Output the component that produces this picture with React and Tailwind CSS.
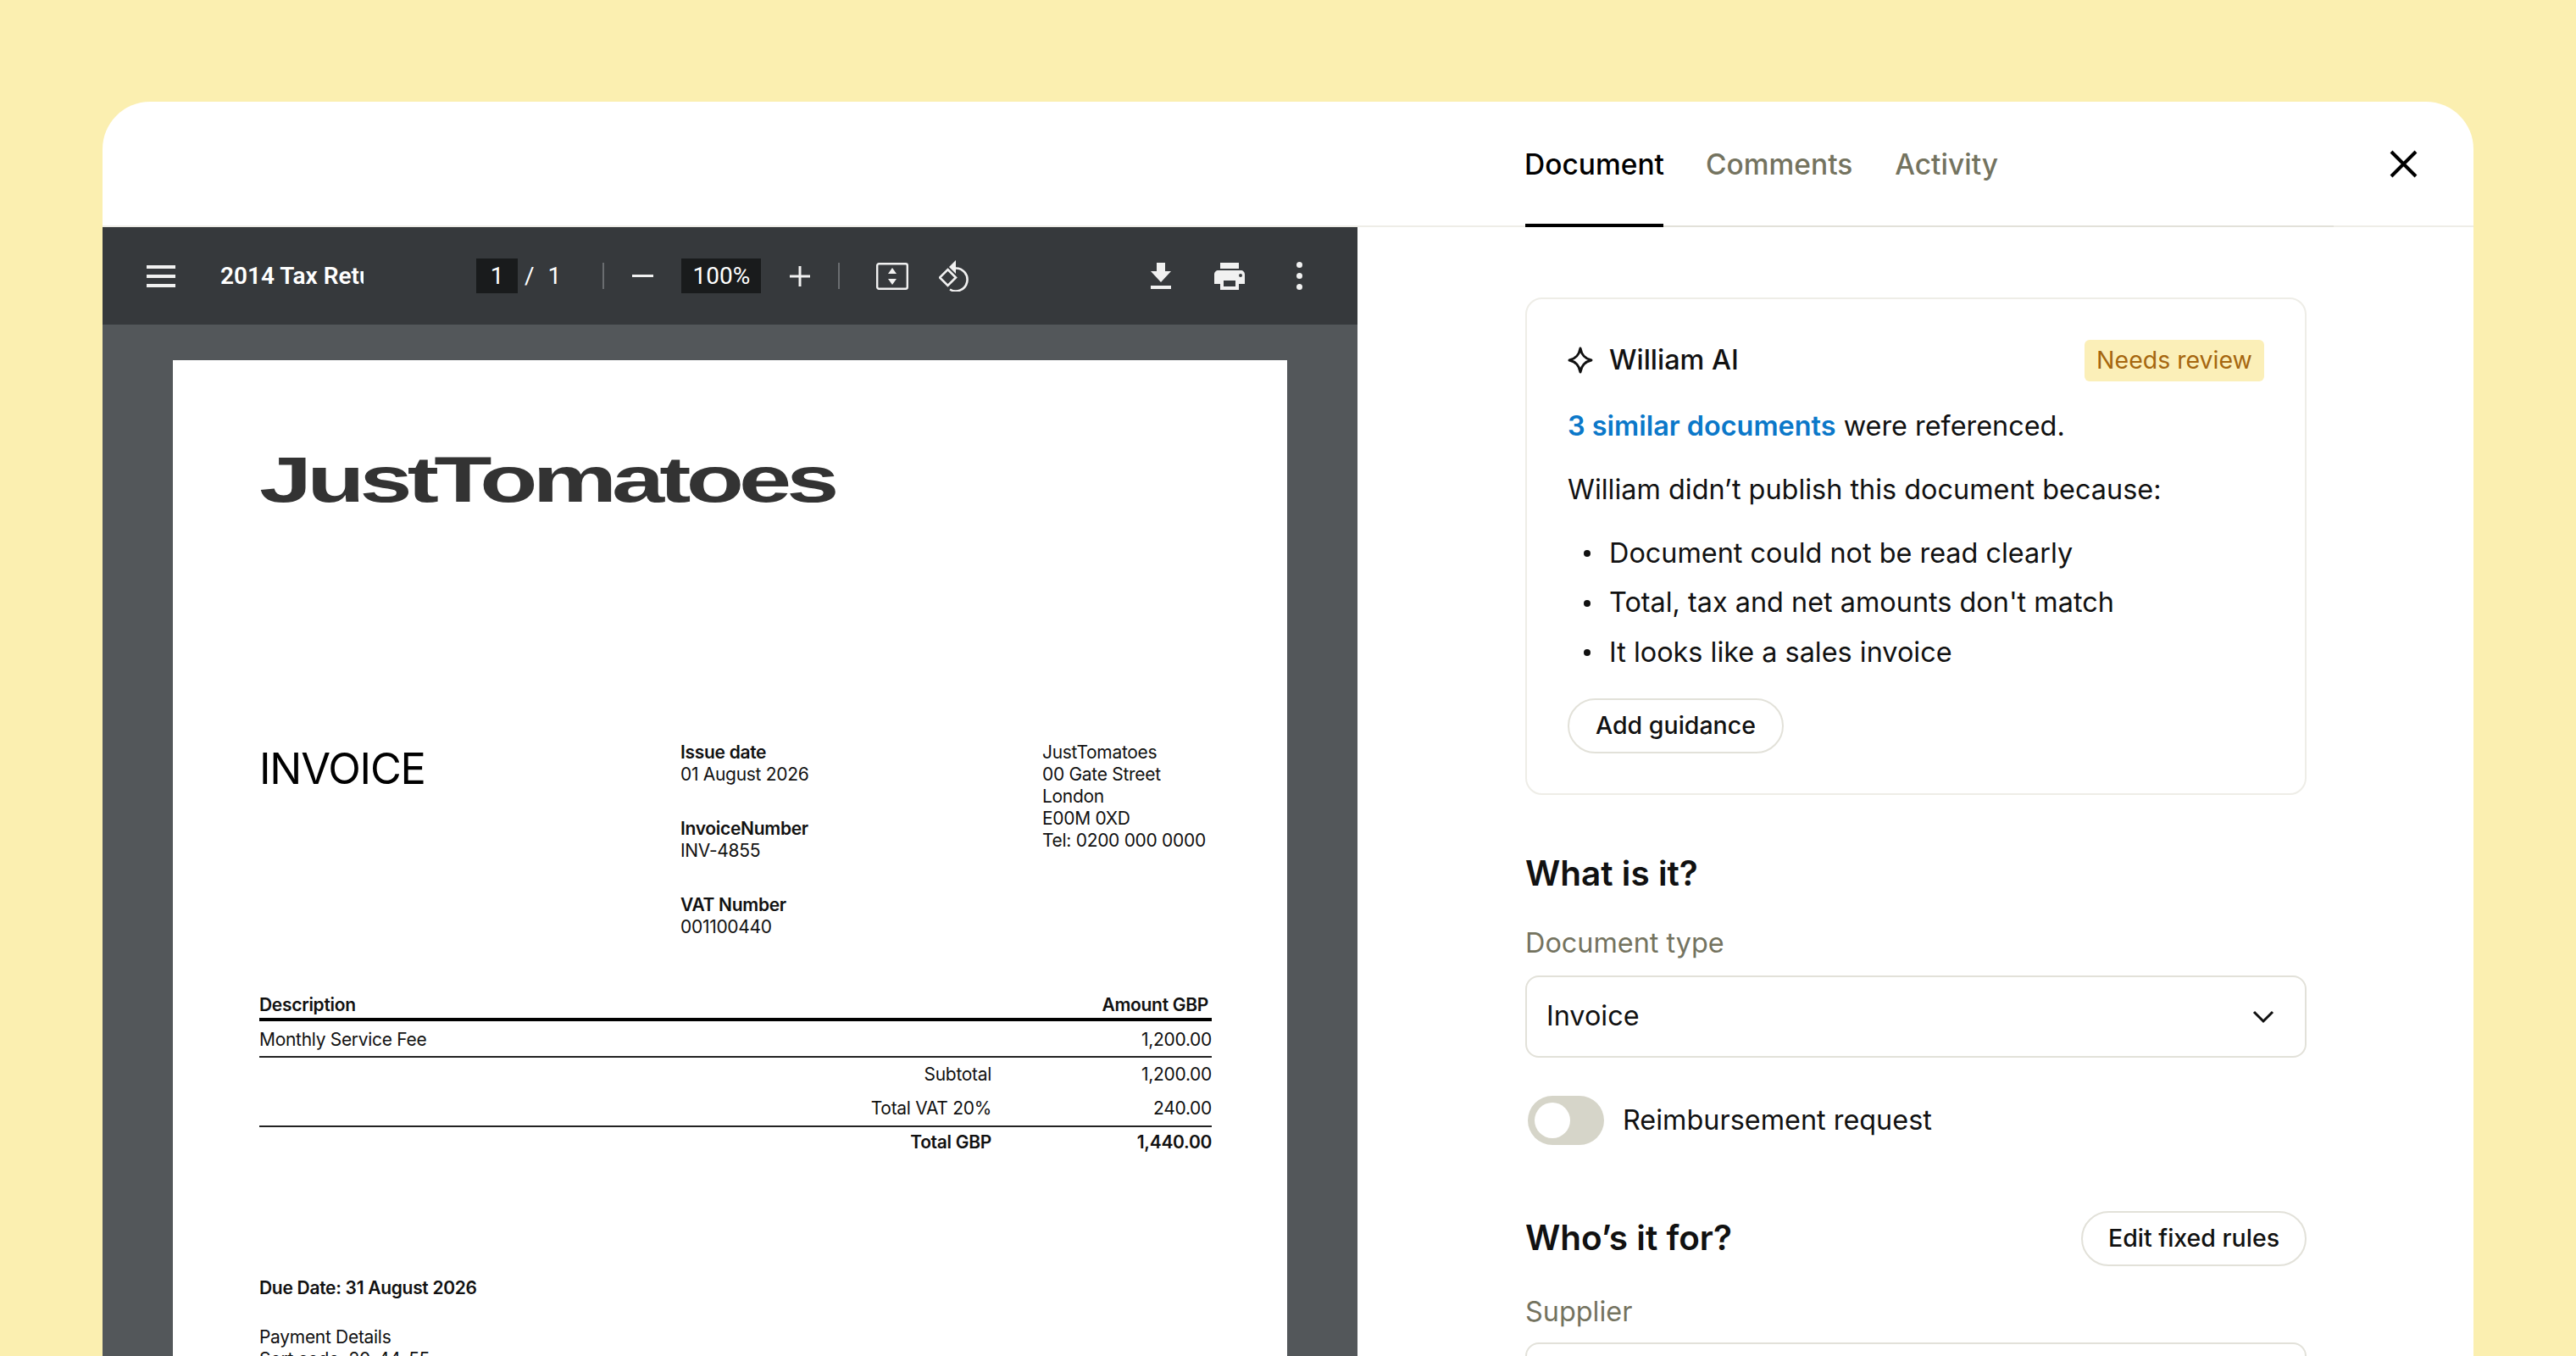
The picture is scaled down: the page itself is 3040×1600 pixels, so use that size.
const F = "font-['Inter','Liberation_Sans',sans-serif]";

function Toolbar() {
  return (
    <div className="h-[115px] shrink-0 bg-[#36393c] flex items-center text-white font-['Roboto',sans-serif] text-[30px] relative">
      <div className="ml-[52px] w-[34px] h-[26px] flex flex-col justify-between">
        <div className="h-[4px] bg-[#f1f1f1]" /><div className="h-[4px] bg-[#f1f1f1]" /><div className="h-[4px] bg-[#f1f1f1]" />
      </div>
      <div className="ml-[53px] w-[169px] overflow-hidden whitespace-nowrap font-semibold text-[28px]">2014 Tax Return.pdf</div>
      <div className="ml-[133px] w-[49px] h-[41px] bg-[#191b1c] flex items-center justify-center text-[28px]">1</div>
      <span className="ml-[8px] text-[28px]">/</span>
      <span className="ml-[16px] text-[28px]">1</span>
      <div className="ml-[49px] w-[2px] h-[31px] bg-[#6a6d70]" />
      <div className="ml-[33px] w-[25px] h-[3px] bg-[#f1f1f1]" />
      <div className="ml-[33px] w-[94px] h-[41px] bg-[#191b1c] flex items-center justify-center text-[28px]">100%</div>
      <svg className="ml-[33px]" width="26" height="26" viewBox="0 0 26 26"><path d="M13 1v24M1 13h24" stroke="#f1f1f1" strokeWidth="3" /></svg>
      <div className="ml-[32px] w-[2px] h-[31px] bg-[#6a6d70]" />
      <svg className="ml-[43px]" width="38" height="32" viewBox="0 0 38 32" fill="none"><rect x="1.200" y="1.200" width="35.600" height="29.600" rx="2" stroke="#f1f1f1" strokeWidth="2.4" /><path d="M19 6l5 7H14zM19 26l5-7H14z" fill="#f1f1f1" /></svg>
      <svg className="ml-[36px]" width="36" height="37" viewBox="0 0 36 37" fill="none" stroke="#f1f1f1" strokeWidth="2.6"><path d="M10.500 11l9.500 9.500-9.500 9.500L1 20.500z" /><path d="M19 9.500A13.500 13.500 0 1 1 13 34.500" /><path d="M20 0v16l-8-8z" fill="#f1f1f1" stroke="none" /></svg>
      <svg className="ml-[214px]" width="24" height="31" viewBox="0 0 24 31"><path d="M7 0h10v10h7L12 23 0 10h7zM0 27h24v4H0z" fill="#f1f1f1" /></svg>
      <svg className="ml-[51px]" width="36" height="32" viewBox="0 0 36 32"><path fillRule="evenodd" d="M7 0h22v7H7zM5 9h26c3 0 5 2 5 5v11h-7v7H7v-7H0V14c0-3 2-5 5-5zm6 12v7h14v-7zm20-8a2 2 0 100 4 2 2 0 000-4z" fill="#f1f1f1" /></svg>
      <div className="ml-[61px] flex flex-col gap-[6px]">
        <div className="w-[7px] h-[7px] rounded-full bg-[#f1f1f1]" /><div className="w-[7px] h-[7px] rounded-full bg-[#f1f1f1]" /><div className="w-[7px] h-[7px] rounded-full bg-[#f1f1f1]" />
      </div>
    </div>
  );
}

function Doc() {
  const small = "text-[21px] leading-[26px] text-[#111] tracking-[-0.3px] whitespace-nowrap";
  return (
    <div className={`bg-white mx-[83px] mt-[42px] flex-1 px-[102px] ${F} text-black`}>
      <div className="pt-[106px] h-[444px]">
        <div className="font-['Liberation_Sans',sans-serif] font-bold text-[76px] leading-[70px] tracking-[-4px] text-[#333] origin-left scale-x-[1.47] whitespace-nowrap">JustTomatoes</div>
      </div>
      <div className="flex h-[302px]">
        <div className="w-[497px] shrink-0 pt-[10px] text-[50.500px] leading-[56px] tracking-[-1.2px] font-normal">INVOICE</div>
        <div className={`w-[427px] shrink-0 pt-[6px] ${small}`}>
          <div className="font-semibold">Issue date</div><div>01 August 2026</div>
          <div className="font-semibold mt-[38px]">InvoiceNumber</div><div>INV-4855</div>
          <div className="font-semibold mt-[38px]">VAT Number</div><div>001100440</div>
        </div>
        <div className={`shrink-0 pt-[6px] ${small}`}>
          <div>JustTomatoes</div><div>00 Gate Street</div><div>London</div><div>E00M 0XD</div><div>Tel: 0200 000 0000</div>
        </div>
      </div>
      <div className={`${small} w-[1124px]`}>
        <div className="flex justify-between font-semibold pr-[4px] h-[34px] items-center border-b-[4px] border-black">
          <span>Description</span><span>Amount GBP</span>
        </div>
        <div className="flex justify-between h-[43px] pt-[2px] items-center border-b-[2px] border-[#222]">
          <span>Monthly Service Fee</span><span>1,200.00</span>
        </div>
        <Row a="Subtotal" b="1,200.00" h="h-[39px]" />
        <Row a="Total VAT 20%" b="240.00" h="h-[43px] border-b-[2px] border-[#222]" />
        <Row a="Total GBP" b="1,440.00" h="h-[36px] font-semibold" />
      </div>
      <div className={`${small} font-semibold mt-[141px]`}>Due Date: 31 August 2026</div>
      <div className={`${small} mt-[32px]`}>Payment Details</div>
      <div className={small}>Sort code: 20-44-55</div>
    </div>
  );
}

function Row({ a, b, h }) {
  return (
    <div className={`flex items-center justify-end ${h}`}>
      <span className="w-[260px] text-right">{a}</span>
      <span className="w-[260px] text-right">{b}</span>
    </div>
  );
}

function Pill({ children, className }) {
  return <div className={`h-[65px] rounded-full border-2 border-[#e2e1d9] flex items-center justify-center text-[28.500px] font-medium text-[#111] ${className}`}>{children}</div>;
}

function Side() {
  return (
    <div className={`flex-1 pl-[198px] pt-[83px] ${F} text-[#111] text-[32.400px]`}>
      <div className="w-[922px]">
        <div className="h-[587px] border-2 border-[#eeede7] rounded-[20px] px-[48px] pt-[47px]">
          <div className="flex items-center justify-between h-[50px]">
            <div className="flex items-center gap-[19px]">
              <svg width="30" height="32" viewBox="0 0 30 32" fill="none"><path d="M15 2c1.500 8 5 12 13 14-8 2-11.500 6-13 14-1.500-8-5-12-13-14 8-2 11.500-6 13-14z" stroke="#111" strokeWidth="3" strokeLinejoin="round" /></svg>
              <span className="font-medium">William AI</span>
            </div>
            <div className="h-[49px] w-[212px] bg-[#fbefb8] rounded-[6px] flex items-center justify-center text-[#a6670f] text-[28.500px]">Needs review</div>
          </div>
          <div className="mt-[28px] h-[50px] flex items-center whitespace-pre"><span className="text-[#0b78c9] font-semibold">3 similar documents</span> were referenced.</div>
          <div className="mt-[25px] h-[50px] flex items-center">William didn’t publish this document because:</div>
          <div className="mt-[21px]">
            {["Document could not be read clearly", "Total, tax and net amounts don't match", "It looks like a sales invoice"].map((t) => (
              <div key={t} className="h-[58.500px] flex items-center">
                <span className="w-[49px] pl-[19px]"><span className="block w-[8px] h-[8px] rounded-full bg-[#111]" /></span>{t}
              </div>
            ))}
          </div>
          <Pill className="w-[255px] mt-[24px]">Add guidance</Pill>
        </div>
        <div className="mt-[68px] text-[40.500px] leading-[50px] font-semibold">What is it?</div>
        <div className="mt-[32px] leading-[50px] text-[#74735f]">Document type</div>
        <div className="mt-[13px] h-[97px] border-2 border-[#e2e1d9] rounded-[16px] flex items-center justify-between pl-[23px] pr-[36px]">
          <span>Invoice</span>
          <svg width="26" height="16" viewBox="0 0 26 16" fill="none"><path d="M2 2l11 11L24 2" stroke="#111" strokeWidth="3" /></svg>
        </div>
        <div className="mt-[45px] flex items-center gap-[22px] pl-[3px]">
          <div className="w-[90px] h-[58px] rounded-full bg-[#d6d5c9] pl-[8px] flex items-center"><div className="w-[42px] h-[42px] rounded-full bg-white" /></div>
          <span>Reimbursement request</span>
        </div>
        <div className="mt-[78px] flex items-center justify-between">
          <span className="text-[40.500px] font-semibold">Who’s it for?</span>
          <Pill className="w-[266px]">Edit fixed rules</Pill>
        </div>
        <div className="mt-[29px] leading-[50px] text-[#74735f]">Supplier</div>
        <div className="mt-[11px] h-[97px] border-2 border-[#e2e1d9] rounded-[16px]" />
      </div>
    </div>
  );
}

export default function App() {
  return (
    <div className="w-[3040px] h-[1600px] overflow-hidden bg-[#fbefb0] pt-[120px] pl-[121px] pr-[121px]">
      <div className="h-[1600px] bg-white rounded-[56px] overflow-hidden flex flex-col">
        <div className={`h-[148px] shrink-0 border-b-2 border-[#eeede7] flex items-stretch pl-[1679px] pr-[66px] ${F} text-[33.500px]`}>
          <div className="w-[954px] flex gap-[50px] border-b-[2px] border-[#e2e1d9] h-[148px]">
            <div className="w-[163px] h-[148px] pt-[4px] flex items-center justify-center font-medium text-black border-b-4 border-black">Document</div>
            <div className="h-[148px] flex items-center font-medium text-[#74735f]">Comments</div>
            <div className="h-[148px] flex items-center font-medium text-[#74735f]">Activity</div>
          </div>
          <div className="flex-1 flex items-center justify-end">
            <svg width="33" height="33" viewBox="0 0 33 33"><path d="M2 2l29 29M31 2L2 31" stroke="#000" strokeWidth="4" /></svg>
          </div>
        </div>
        <div className="flex flex-1">
          <div className="w-[1481px] flex flex-col bg-[#53575a]">
            <Toolbar />
            <Doc />
          </div>
          <Side />
        </div>
      </div>
    </div>
  );
}
